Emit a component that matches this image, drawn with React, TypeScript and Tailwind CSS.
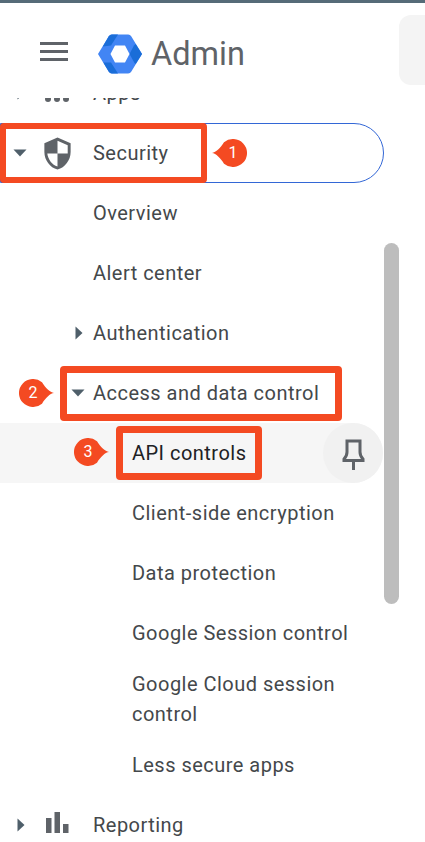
import type { ReactNode } from 'react';

const font = { fontFamily: 'Roboto, sans-serif' };

function CaretDown() {
  return (
    <svg width="14" height="8" viewBox="0 0 14 8" className="block">
      <path d="M0.5 0.5h13L7 7.5z" fill="#4f5f6a" />
    </svg>
  );
}

function CaretRight() {
  return (
    <svg width="8" height="14" viewBox="0 0 8 14" className="ml-1 block">
      <path d="M0.5 0.5v13L7.500 7z" fill="#4f5f6a" />
    </svg>
  );
}

// top-level rows: caret, icon, label
function TopRow({ caret, icon, children }: { caret: ReactNode; icon: ReactNode; children: ReactNode }) {
  return (
    <div className="relative flex h-[60px] items-center pl-[13px] text-[20px] tracking-[0.48px] text-[#44484b]">
      <span className="flex w-[27px] shrink-0 items-center">{caret}</span>
      <span className="w-[53px] shrink-0">{icon}</span>
      {children}
    </div>
  );
}

// second level rows with an optional caret in front
function SubRow({ caret, children }: { caret?: ReactNode; children: ReactNode }) {
  return (
    <div className="flex h-[60px] items-center pl-[71px] text-[20px] tracking-[0.48px] text-[#44484b]">
      <span className="flex w-[22px] shrink-0 items-center">{caret}</span>
      {children}
    </div>
  );
}

function LeafRow({ children, className = 'h-[60px]' }: { children: ReactNode; className?: string }) {
  return (
    <div className={`flex items-center pl-[132px] pr-[70px] text-[20px] leading-[30px] tracking-[0.48px] text-[#44484b] ${className}`}>
      {children}
    </div>
  );
}

function Badge({ n, dir, className }: { n: number; dir: 'left' | 'right'; className: string }) {
  return (
    <div className={`absolute flex h-[28px] w-[35px] items-center justify-center text-[16px] text-white ${dir === 'left' ? 'pl-[7px]' : 'pr-[7px]'} ${className}`}>
      <svg width="35" height="28" viewBox="0 0 35 28" className={`absolute left-0 top-0 ${dir === 'right' ? '-scale-x-100' : ''}`}>
        <path d="M0 14C4 13.500 8.500 9 12 3.300A14 14 0 1 1 12 24.700C8.500 19 4 14.500 0 14Z" fill="#f44a22" />
      </svg>
      <span className="relative">{n}</span>
    </div>
  );
}

function Logo() {
  return (
    <svg width="44" height="40" viewBox="0 0 44 40" className="block">
      <path d="M0 20L10.800 2.200Q11.800 .5 13.800 .5H30.200Q32.200 .5 33.200 2.200L44 20L33.200 37.800Q32.200 39.500 30.200 39.500H13.800Q11.800 39.500 10.800 37.800Z" fill="#4285f4" />
      <path d="M4.800 12.500L10.800 2.200Q11.800 .5 13.800 .5H20L13 11.500Z" fill="#1a6dd8" />
      <path d="M31.500 20L36 11.500L37.700 10L44 20L37.700 30L36.500 29Z" fill="#1a6dd8" />
      <path d="M5.300 28.500H13L20 39.500H13.800Q11.800 39.500 10.800 37.800Z" fill="#1a6dd8" />
      <path d="M12.500 20L17 11.500H27L31.500 20L27 28.500H17Z" fill="#fff" />
    </svg>
  );
}

export default function App() {
  return (
    <div className="relative h-[842px] w-[425px] overflow-hidden bg-white" style={font}>
      <div className="h-[3px] bg-[#566b78]" />
      <header className="relative z-10 flex h-[95px] items-start bg-white">
        <div className="ml-[40px] mt-[39px] flex w-[28px] flex-col gap-[5px]">
          <div className="h-[3px] bg-[#5f6368]" />
          <div className="h-[3px] bg-[#5f6368]" />
          <div className="h-[3px] bg-[#5f6368]" />
        </div>
        <div className="ml-[30px] mt-[31px]">
          <Logo />
        </div>
        <div className="ml-[9px] mt-[30px] text-[32.5px] leading-[42px] text-[#5f6368]">Admin</div>
        <div className="ml-auto mt-[12px] h-[70px] w-[26px] rounded-l-[12px] bg-[#f4f4f4]" />
      </header>

      <nav className="-mt-[35px]">
        <TopRow
          caret={<CaretRight />}
          icon={
            <svg width="36" height="36" viewBox="0 0 36 36" className="block">
              <g fill="#5f6368">
                <circle cx="8" cy="24" r="3" />
                <circle cx="17" cy="24" r="3" />
                <circle cx="26" cy="24" r="3" />
              </g>
            </svg>
          }
        >
          Apps
        </TopRow>
        <TopRow
          caret={<CaretDown />}
          icon={
            <svg width="35" height="35" viewBox="0 0 24 24" className="block -scale-x-100">
              <path d="M12 1L3 5v6c0 5.550 3.840 10.740 9 12 5.160-1.260 9-6.450 9-12V5l-9-4zm0 10.990h7c-.53 4.120-3.280 7.790-7 8.940V12H5V6.300l7-3.110v8.800z" fill="#5f6368" />
            </svg>
          }
        >
          Security
          <span className="absolute inset-y-0 left-0 right-[41px] rounded-r-[30px] border border-[#3367d6]" />
        </TopRow>
        <SubRow>Overview</SubRow>
        <SubRow>Alert center</SubRow>
        <SubRow caret={<CaretRight />}>Authentication</SubRow>
        <SubRow caret={<CaretDown />}>Access and data control</SubRow>
        <LeafRow className="mr-[42px] h-[60px] rounded-r-[30px] bg-[#f6f6f6] !pr-0 !text-[#202124]">
          API controls
          <span className="ml-auto flex h-[60px] w-[60px] items-center justify-center rounded-full bg-[#f1f1f1]">
            <svg width="36" height="36" viewBox="0 0 36 36" className="block" fill="none" stroke="#5f6368" strokeWidth="3">
              <path d="M12 6H25V17Q25 21 28 24V25.500H9V24Q12 21 12 17Z" />
              <path d="M18.500 26V35" />
            </svg>
          </span>
        </LeafRow>
        <LeafRow>Client-side encryption</LeafRow>
        <LeafRow>Data protection</LeafRow>
        <LeafRow>Google Session control</LeafRow>
        <LeafRow className="h-[72px]">Google Cloud session control</LeafRow>
        <LeafRow>Less secure apps</LeafRow>
        <TopRow
          caret={<CaretRight />}
          icon={
            <svg width="36" height="36" viewBox="0 0 36 36" className="block">
              <g fill="#5f6368">
                <rect x="6" y="11" width="5.500" height="15" />
                <rect x="14.500" y="5" width="5.500" height="21" />
                <rect x="23" y="17" width="5.500" height="9" />
              </g>
            </svg>
          }
        >
          Reporting
        </TopRow>
      </nav>

      {/* scrollbar */}
      <div className="absolute left-[384px] top-[243px] h-[361px] w-[15px] rounded-full bg-[#bdbdbd]" />

      {/* red callouts */}
      <div className="absolute left-0 top-[123px] h-[60px] w-[207px] rounded-[4px] border-[6px] border-[#f44a22]" />
      <div className="absolute left-[60px] top-[366px] h-[55px] w-[282px] rounded-[4px] border-[7px] border-[#f44a22]" />
      <div className="absolute left-[116px] top-[426px] h-[54px] w-[146px] rounded-[4px] border-[7px] border-[#f44a22]" />
      <Badge n={1} dir="left" className="left-[212px] top-[139px]" />
      <Badge n={2} dir="right" className="left-[19px] top-[379px]" />
      <Badge n={3} dir="right" className="left-[74px] top-[438px]" />
    </div>
  );
}
